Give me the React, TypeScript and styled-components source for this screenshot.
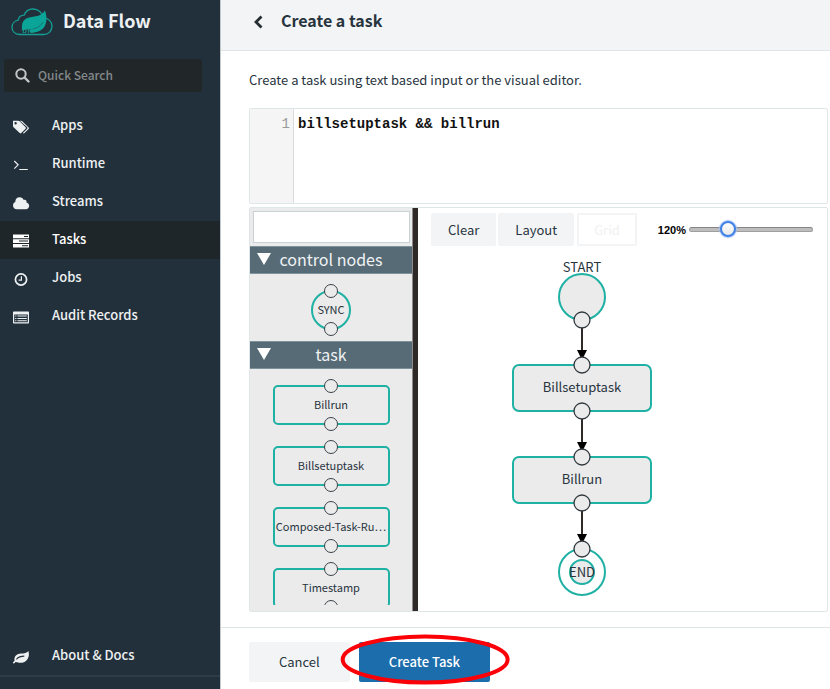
import React, { useState } from "react";
import styled, { createGlobalStyle, css } from "styled-components";

const teal = "#1fb1a3";
const ink = "#28343e";
const line = "#dfe6e8";

const GlobalStyle = createGlobalStyle`
  *, *::before, *::after { box-sizing: border-box; }
  body {
    margin: 0;
    background: #fff;
    color: ${ink};
    font-family: "Noto Sans CJK SC", "Noto Sans", sans-serif;
    font-size: 13px;
    line-height: 20px;
  }
  button, input, textarea { font: inherit; color: inherit; margin: 0; }
`;

const Page = styled.div`
  display: grid;
  grid-template-columns: 220px minmax(0, 1fr);
  min-height: 100vh;
`;

/* ---------- sidebar ---------- */

const Sidebar = styled.aside`
  display: flex;
  flex-direction: column;
  background: #22303c;
  color: #eef1f2;
`;

const Brand = styled.div`
  display: flex;
  align-items: center;
  gap: 10px;
  height: 44px;
  padding-left: 11px;
  font-size: 18px;
  font-weight: 700;
`;

const BrandName = styled.span`
  padding-bottom: 4px;
`;

const SearchBox = styled.label`
  display: flex;
  align-items: center;
  gap: 8px;
  height: 33px;
  margin: 15px 18px 0 4px;
  padding: 0 11px;
  border-radius: 3px;
  background: #212729;
`;

const SearchInput = styled.input`
  min-width: 0;
  flex: 1;
  padding: 0 0 2px;
  border: 0;
  outline: 0;
  background: transparent;
  font-size: 12px;
  font-weight: 500;
  &::placeholder { color: #84898b; opacity: 1; }
`;

const Nav = styled.nav`
  display: flex;
  flex-direction: column;
  flex: 1;
  padding-top: 15px;
`;

const NavLink = styled.a<{ $active?: boolean; $last?: boolean }>`
  display: flex;
  align-items: center;
  gap: 22px;
  height: 38px;
  padding: 0 12px 2px;
  color: ${(p) => (p.$active ? "#fff" : "#eef1f2")};
  background: ${(p) => (p.$active ? "#1f2629" : "transparent")};
  font-weight: 500;
  text-decoration: none;
  ${(p) => p.$last && css`margin-top: auto;`}
  svg { flex: none; margin-top: 4px; }
`;

const SidebarFoot = styled.div`
  height: 14px;
  border-top: 2px solid #2d3c46;
`;

/* ---------- main column ---------- */

const Main = styled.main`
  display: flex;
  flex-direction: column;
  border-left: 1px solid #c3c8cc;
`;

const Header = styled.header`
  display: flex;
  align-items: center;
  gap: 15px;
  height: 51px;
  padding: 0 28px 7px 30px;
  border-bottom: 1px solid ${line};
  background: #f2f4f5;
`;

const BackButton = styled.button`
  display: flex;
  padding: 0;
  border: 0;
  background: none;
`;

const Title = styled.h1`
  margin: 0;
  padding-bottom: 3px;
  font-size: 16px;
  font-weight: 700;
  line-height: 24px;
`;

const Content = styled.section`
  display: flex;
  flex-direction: column;
  gap: 3px;
  padding: 19px 2px 15px 28px;
`;

const Intro = styled.p`
  margin: 0 0 15px;
`;

const Editor = styled.div`
  display: flex;
  height: 96px;
  border: 1px solid ${line};
  border-radius: 2px;
  font-family: "Liberation Mono", monospace;
  font-size: 14px;
`;

const Gutter = styled.div`
  width: 44px;
  padding: 5px 3px;
  border-right: 1px solid #d8dcde;
  background: #f5f5f5;
  color: #999;
  text-align: right;
`;

const CodeInput = styled.textarea`
  flex: 1;
  padding: 5px 4px;
  border: 0;
  outline: 0;
  resize: none;
  background: transparent;
  color: #111;
  font-weight: 700;
`;

const Designer = styled.div`
  display: flex;
  height: 405px;
  border: 1px solid ${line};
  border-radius: 2px;
`;

/* ---------- palette ---------- */

const Palette = styled.div`
  display: flex;
  flex-direction: column;
  width: 162px;
  padding-bottom: 6px;
  overflow: hidden;
  background: #ebebeb;
`;

const PaletteFilter = styled.input`
  flex: none;
  height: 32px;
  margin: 3px 2px 3px 3px;
  padding: 0 6px;
  border: 1px solid #ccd2d4;
  outline: 0;
  background: #fff;
  box-shadow: 0 0 0 1px #e6ecee;
`;

const GroupButton = styled.button`
  display: grid;
  grid-template-columns: 14px 1fr 14px;
  align-items: center;
  flex: none;
  height: 28px;
  padding: 0 7px 2px;
  border: 1px solid #7e929b;
  border-width: 1px 0;
  background: #566b76;
  color: #f0f2f3;
  font-size: 16px;
  line-height: 24px;
`;

const GroupItems = styled.div<{ $clip?: boolean }>`
  display: flex;
  flex-direction: column;
  align-items: center;
  gap: 21px;
  padding: 16px 0 11px;
  ${(p) => p.$clip && css`flex: 1; min-height: 0; overflow: hidden;`}
`;

const PaletteNode = styled.div<{ $round?: boolean }>`
  position: relative;
  display: flex;
  flex: none;
  align-items: center;
  justify-content: center;
  width: ${(p) => (p.$round ? 40 : 117)}px;
  height: 40px;
  padding-bottom: 2px;
  border: 2px solid ${teal};
  border-radius: ${(p) => (p.$round ? "50%" : "5px")};
  font-size: 11px;
  white-space: nowrap;
  &::before, &::after {
    content: "";
    position: absolute;
    left: calc(50% - 7px);
    width: 14px;
    height: 14px;
    border: 1px solid #3a4248;
    border-radius: 50%;
    background: #ebebeb;
  }
  &::before { top: -8px; }
  &::after { bottom: -8px; }
`;

const Divider = styled.div`
  width: 6px;
  background: #2f2a28;
  border-left: 1px solid #8d8a89;
`;

/* ---------- canvas ---------- */

const Canvas = styled.div`
  flex: 1;
  min-width: 0;
  overflow: hidden;
  padding: 5px 13px 0;
`;

const Toolbar = styled.div`
  display: flex;
  align-items: center;
  gap: 2px;
`;

const ToolButton = styled.button`
  height: 33px;
  padding: 0 17px;
  border: 0;
  border-radius: 2px;
  background: #f2f4f5;
  &:disabled {
    margin-left: 1px;
    padding: 0 15px;
    border: 2px solid #f2f4f5;
    background: #fff;
    color: #eff1f2;
  }
`;

const Zoom = styled.label`
  display: flex;
  align-items: center;
  gap: 3px;
  margin-left: 19px;
  color: #000;
  font-family: "Liberation Sans", Arial, sans-serif;
  font-size: 11px;
  font-weight: 700;
`;

const Range = styled.input`
  width: 124px;
  height: 20px;
  appearance: none;
  background: transparent;
  &::-webkit-slider-runnable-track {
    height: 5px;
    border: 1px solid #a0a0a0;
    border-top-color: #858585;
    border-radius: 3px;
    background: #bdbdbd;
  }
  &::-webkit-slider-thumb {
    appearance: none;
    width: 16px;
    height: 16px;
    margin-top: -7px;
    border: 2px solid #3f7fe8;
    border-radius: 50%;
    background: linear-gradient(#fff, #e8e8e8);
    box-shadow: 0 0 1px 1px #a3c1f5;
  }
`;

const Graph = styled.svg`
  display: block;
  width: 160px;
  height: 352px;
  margin-left: 71px;
  overflow: visible;
  font-size: 13px;
`;

/* ---------- footer ---------- */

const Footer = styled.footer`
  display: flex;
  gap: 9px;
  padding: 14px 28px 5px;
  border-top: 1px solid ${line};
`;

const ActionButton = styled.button<{ $primary?: boolean }>`
  height: 40px;
  padding: 0 30px;
  border: 0;
  border-radius: 2px;
  background: ${(p) => (p.$primary ? "#1b6dab" : "#f2f4f5")};
  color: ${(p) => (p.$primary ? "#fff" : ink)};
  font-weight: ${(p) => (p.$primary ? 500 : 400)};
`;

const Marked = styled.div`
  position: relative;
  display: flex;
`;

const Ring = styled.svg`
  position: absolute;
  left: -18px;
  top: -8px;
  width: calc(100% + 37px);
  height: 51px;
  pointer-events: none;
  overflow: visible;
`;

/* ---------- icons ---------- */

const Logo = () => (
  <svg width="42" height="28" viewBox="0 0 42 28" aria-hidden="true">
    <path
      d="M8.5 26.5C4 26.300 1 23.300 1 19.300c0-3.600 2.600-6.500 6.200-7.100.4-2.900 2.800-4.900 5.900-5C14.500 3.300 17.900 1 21.900 1c5.200 0 9.600 3.600 10.500 8.600 4.900.5 8.600 4 8.600 8.500 0 4.800-3.500 8.400-8.300 8.400z"
      fill="none"
      stroke="#159e92"
      strokeWidth="1.300"
    />
    <path
      d="M34 2.500c2.500 7.500 1.800 14.300-2.300 18.300-3.300 3.200-8 3.900-12.500 3.700l-1.200-3.200c-2.700.1-4.300.2-6.800 1.500C10.400 16.600 11.400 12.600 15.300 10.500c4.600-2.400 14.500-.6 18.700-8z"
      fill="#0aa598"
    />
    <path d="M15 21.600c7.500.6 13-1.600 17.300-7.600" fill="none" stroke="#1b6a6a" strokeWidth="0.900" />
    <text x="11.500" y="25" fontSize="6" fontFamily="Liberation Sans" letterSpacing="1" fill="#159e92">DIS</text>
  </svg>
);

const SearchIcon = () => (
  <svg width="15" height="15" viewBox="0 0 15 15" fill="none" stroke="#c3c6c7" aria-hidden="true">
    <circle cx="6" cy="6" r="4.700" strokeWidth="2" />
    <path d="M9.500 9.500l4 4" strokeWidth="2.400" strokeLinecap="round" />
  </svg>
);

const NavIcon = ({ children }: { children: React.ReactNode }) => (
  <svg width="18" height="16" viewBox="0 0 18 16" fill="currentColor" aria-hidden="true">{children}</svg>
);

const TagsIcon = () => (
  <NavIcon>
    <path
      fillRule="evenodd"
      d="M1 1.700h5.200c.5 0 1 .2 1.400.6l6 5.900c.5.500.5 1 0 1.500l-4.400 4.400c-.5.500-1 .5-1.500 0L1.600 8.300C1.200 7.900 1 7.500 1 7zM3.600 3.100a1.200 1.200 0 1 0 0 2.400 1.200 1.200 0 0 0 0-2.400z"
    />
    <path d="M7.800 1.700h1c.5 0 1 .2 1.400.6l6.400 6.200c.5.500.5 1 0 1.500l-4.100 4.100c-.6.500-1.200.4-1.600-.1l4.100-4.100c.6-.6.600-1.300 0-1.900z" />
  </NavIcon>
);

const TerminalIcon = () => (
  <NavIcon>
    <path d="M2.300 4l3.800 3.800-3.800 3.800" fill="none" stroke="currentColor" strokeWidth="1.200" />
    <path d="M7.300 12h8.500v1H7.300z" />
  </NavIcon>
);

const CloudIcon = () => (
  <NavIcon>
    <path d="M5 14.200c-2.400 0-4-1.600-4-3.700 0-1.500.9-2.800 2.300-3.400C3.200 4.300 5 2.300 7.600 2.300c1.900 0 3.400 1.100 4.100 2.700 1.600-.8 3.300.5 2.800 2.400 1.500.4 2.700 1.700 2.700 3.400 0 1.900-1.500 3.400-3.400 3.400z" />
  </NavIcon>
);

const TasksIcon = () => (
  <NavIcon>
    <path
      fillRule="evenodd"
      d="M1 1.500h16v3.700H1zM12 2.900v1h4v-1zM1 6.200h16v3.700H1zM7 7.600v1h9v-1zM1 10.900h16v3.700H1zM10 12.300v1h6v-1z"
    />
  </NavIcon>
);

const ClockIcon = () => (
  <NavIcon>
    <circle cx="9" cy="8.500" r="5.600" fill="none" stroke="currentColor" strokeWidth="1.700" />
    <path d="M9.400 5.200v4H6.600" fill="none" stroke="currentColor" strokeWidth="1.200" />
  </NavIcon>
);

const RecordsIcon = () => (
  <NavIcon>
    <path
      fillRule="evenodd"
      d="M2 2.500h14c.6 0 1 .4 1 1v10c0 .6-.4 1-1 1H2c-.6 0-1-.4-1-1v-10c0-.6.4-1 1-1zM2.200 5.600v7.700h13.600V5.600z"
    />
    <path d="M3.200 6.600h1.200v1H3.200zM5.500 6.600h9.300v1H5.500zM3.200 8.900h1.200v1H3.200zM5.500 8.900h9.300v1H5.500zM3.200 11.200h1.200v1H3.200zM5.500 11.200h9.300v1H5.500z" />
  </NavIcon>
);

const LeafIcon = () => (
  <NavIcon>
    <path
      fillRule="evenodd"
      d="M16.400 2c1.200 4.200.2 8-2.800 10.200-2.500 1.800-5.800 2.100-8.300 1l-1.900-.2c-.5.600-.9 1.500-1.700 1.400-.9-.2-.9-.9-.4-1.400l1.300-1.300C1.800 7.900 4 5.300 7.700 4.700c3-.5 6.300.3 8.700-2.700zM4.800 10.700c2-2.300 4.200-3 7.500-3V6.600c-3.600 0-6.300 1-8.300 3.300z"
    />
  </NavIcon>
);

const BackIcon = () => (
  <svg width="15" height="14" viewBox="0 0 15 14" fill="none" stroke="#252d32" strokeWidth="2.800" aria-hidden="true">
    <path d="M10.500 1.500L5 7l5.500 5.500" />
  </svg>
);

const Caret = () => (
  <svg width="14" height="12" viewBox="0 0 14 12" aria-hidden="true">
    <path d="M0 0h14L7 12z" fill="#fff" />
  </svg>
);

/* ---------- flow graph ---------- */

const Port = ({ y }: { y: number }) => (
  <circle cx="80" cy={y} r="8" fill="#ebebeb" stroke="#31393e" strokeWidth="1.300" />
);

const Link = ({ from, to }: { from: number; to: number }) => (
  <g>
    <path d={`M80 ${from}V${to - 6}`} stroke="#2f2a28" strokeWidth="2" />
    <path d={`M75 ${to - 8}h10l-5 10z`} fill="#000" />
  </g>
);

const TaskNode = ({ y, name }: { y: number; name: string }) => (
  <g>
    <rect x="11" y={y} width="138" height="46" rx="6" fill="#ebebeb" stroke={teal} strokeWidth="2" />
    <text x="80" y={y + 27} textAnchor="middle" fill={ink}>{name}</text>
  </g>
);

const FlowGraph = () => (
  <Graph viewBox="0 0 160 352" role="img" aria-label="Task flow">
    <circle cx="80" cy="51" r="23" fill="#ebebeb" stroke={teal} strokeWidth="2" />
    <text x="80" y="26" textAnchor="middle" fill={ink}>START</text>
    <TaskNode y={119} name="Billsetuptask" />
    <TaskNode y={211} name="Billrun" />
    <circle cx="80" cy="326" r="23" fill="#fff" stroke={teal} strokeWidth="2" />
    <circle cx="80" cy="326" r="12" fill="#ebebeb" stroke={teal} strokeWidth="2" />
    <text x="80" y="331" textAnchor="middle" fill={ink}>END</text>
    <Link from={74} to={112} />
    <Link from={165} to={204} />
    <Link from={257} to={296} />
    {[74, 119, 165, 211, 257, 303].map((y) => <Port key={y} y={y} />)}
  </Graph>
);

const navItems = [
  { name: "Apps", Icon: TagsIcon },
  { name: "Runtime", Icon: TerminalIcon },
  { name: "Streams", Icon: CloudIcon },
  { name: "Tasks", Icon: TasksIcon },
  { name: "Jobs", Icon: ClockIcon },
  { name: "Audit Records", Icon: RecordsIcon },
];

const paletteTasks = ["Billrun", "Billsetuptask", "Composed-Task-Ru…", "Timestamp"];

export default function App() {
  const [code, setCode] = useState("billsetuptask && billrun");
  const [zoom, setZoom] = useState(120);

  return (
    <>
      <GlobalStyle />
      <Page>
        <Sidebar>
          <Brand><Logo /><BrandName>Data Flow</BrandName></Brand>
          <SearchBox>
            <SearchIcon />
            <SearchInput placeholder="Quick Search" aria-label="Quick Search" />
          </SearchBox>
          <Nav>
            {navItems.map(({ name, Icon }) => (
              <NavLink key={name} href="#" $active={name === "Tasks"}><Icon />{name}</NavLink>
            ))}
            <NavLink href="#" $last><LeafIcon />About &amp; Docs</NavLink>
          </Nav>
          <SidebarFoot />
        </Sidebar>

        <Main>
          <Header>
            <BackButton aria-label="Back"><BackIcon /></BackButton>
            <Title>Create a task</Title>
          </Header>
          <Content>
            <Intro>Create a task using text based input or the visual editor.</Intro>
            <Editor>
              <Gutter>1</Gutter>
              <CodeInput
                aria-label="Task definition"
                spellCheck={false}
                value={code}
                onChange={(e) => setCode(e.target.value)}
              />
            </Editor>
            <Designer>
              <Palette>
                <PaletteFilter aria-label="Filter palette" />
                <GroupButton><Caret />control nodes</GroupButton>
                <GroupItems>
                  <PaletteNode $round>SYNC</PaletteNode>
                </GroupItems>
                <GroupButton><Caret />task</GroupButton>
                <GroupItems $clip>
                  {paletteTasks.map((name) => <PaletteNode key={name}>{name}</PaletteNode>)}
                </GroupItems>
              </Palette>
              <Divider />
              <Canvas>
                <Toolbar>
                  <ToolButton>Clear</ToolButton>
                  <ToolButton>Layout</ToolButton>
                  <ToolButton disabled>Grid</ToolButton>
                  <Zoom>
                    {zoom}%
                    <Range
                      type="range"
                      min={80}
                      max={220}
                      value={zoom}
                      onChange={(e) => setZoom(Number(e.target.value))}
                    />
                  </Zoom>
                </Toolbar>
                <FlowGraph />
              </Canvas>
            </Designer>
          </Content>
          <Footer>
            <ActionButton>Cancel</ActionButton>
            <Marked>
              <ActionButton $primary>Create Task</ActionButton>
              <Ring aria-hidden="true">
                <ellipse cx="50%" cy="50%" rx="49%" ry="23" fill="none" stroke="#fb0007" strokeWidth="4" />
              </Ring>
            </Marked>
          </Footer>
        </Main>
      </Page>
    </>
  );
}
